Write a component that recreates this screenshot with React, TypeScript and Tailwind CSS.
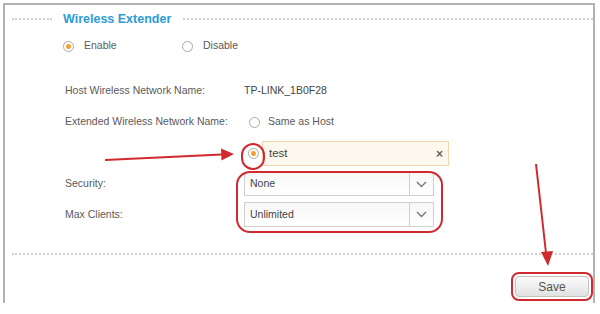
import React from 'react';

const font = { fontFamily: '"Liberation Sans", Arial, sans-serif' };

function Radio({ checked }: { checked?: boolean }) {
  return (
    <span className="flex h-[11px] w-[11px] shrink-0 items-center justify-center rounded-full border border-[#a9a9a9] bg-white">
      {checked && <span className="h-[5px] w-[5px] rounded-full bg-[#f0a22e]" />}
    </span>
  );
}

function Select({ value }: { value: string }) {
  return (
    <div className="flex h-full w-[190px] items-stretch border border-[#cfcfcf] bg-gradient-to-b from-[#f7f7f7] to-white">
      <span className="flex flex-1 items-center pl-[5px] text-[#444]">{value}</span>
      <span className="flex w-[24px] items-center justify-center border-l border-[#cfcfcf]">
        <svg width="11" height="7" viewBox="0 0 11 7" fill="none">
          <path d="M1 1l4.5 4.5L10 1" stroke="#777" strokeWidth="1.4" />
        </svg>
      </span>
    </div>
  );
}

function Dots({ className = '' }: { className?: string }) {
  return <div className={`border-t-2 border-dotted border-[#cfcfcf] ${className}`} />;
}

export default function App() {
  return (
    <div className="relative h-[314px] w-[600px] bg-white text-[10.5px] text-[#5a5a5a]" style={font}>
      <div className="ml-[3px] mt-[3px] flex h-[300px] w-[592px] flex-col border-x-2 border-t-2 border-[#b2b2b2]">
        {/* title */}
        <div className="flex h-[28px] items-center pl-[7px]">
          <Dots className="w-[40px]" />
          <span className="ml-[11px] mr-[12px] text-[12.5px] font-bold text-[#2d9cd7]">Wireless Extender</span>
          <Dots className="flex-1" />
        </div>

        <div className="flex h-[26px] items-center pl-[58px]">
          <div className="flex w-[119px] items-center gap-[10px]">
            <Radio checked />
            <span>Enable</span>
          </div>
          <div className="flex items-center gap-[10px]">
            <Radio />
            <span>Disable</span>
          </div>
        </div>

        <div className="mt-[20px] flex h-[24px] items-center pl-[60px]">
          <span className="w-[179px]">Host Wireless Network Name:</span>
          <span className="text-[#444]">TP-LINK_1B0F28</span>
        </div>

        <div className="mt-[7px] flex h-[24px] items-center pl-[60px]">
          <span className="w-[179px]">Extended Wireless Network Name:</span>
          <span className="ml-[5px] flex items-center gap-[8px]">
            <Radio />
            <span>Same as Host</span>
          </span>
        </div>

        <div className="mt-[7px] flex h-[25px] items-center pl-[243px]">
          <Radio checked />
          <div className="ml-[3px] flex h-full w-[187px] items-center justify-between border border-[#f2d6ac] bg-[#fdf8ee] pl-[6px] pr-[5px]">
            <span className="text-[11.5px] text-[#444]">test</span>
            <span className="text-[12px] font-bold text-[#666]">×</span>
          </div>
        </div>

        <div className="mt-[6px] flex h-[24px] items-center pl-[60px]">
          <span className="w-[179px]">Security:</span>
          <Select value="None" />
        </div>

        <div className="mt-[6px] flex h-[25px] items-center pl-[60px]">
          <span className="w-[179px]">Max Clients:</span>
          <Select value="Unlimited" />
        </div>

        <Dots className="ml-[7px] mt-[26px]" />

        <div className="mt-[17px] flex justify-end">
          <div className="flex h-[29px] w-[82px] items-center justify-center rounded-[8px] border-2 border-[#d02a30] p-[2px]">
            <button className="h-full w-full rounded-[4px] border border-[#c2c2c2] bg-gradient-to-b from-[#fbfbfb] to-[#e2e2e2] text-[12px] text-[#555]">
              Save
            </button>
          </div>
        </div>
      </div>

      {/* annotations */}
      <div className="absolute left-[241px] top-[140px] h-[27px] w-[24px] rounded-full border-2 border-[#d02a30]" />
      <div className="absolute left-[236px] top-[168px] h-[62px] w-[207px] rounded-[14px] border-2 border-[#d02a30]" />
      <svg className="pointer-events-none absolute left-0 top-0" width="600" height="314">
        <line x1="105" y1="157" x2="222" y2="151.5" stroke="#d02a30" strokeWidth="2" />
        <polygon points="234,151 221,145.5 221.5,157.5" fill="#d02a30" />
        <line x1="536" y1="161" x2="546" y2="250" stroke="#d02a30" strokeWidth="2" />
        <polygon points="548,263 541,249 553,248" fill="#d02a30" />
      </svg>
    </div>
  );
}
